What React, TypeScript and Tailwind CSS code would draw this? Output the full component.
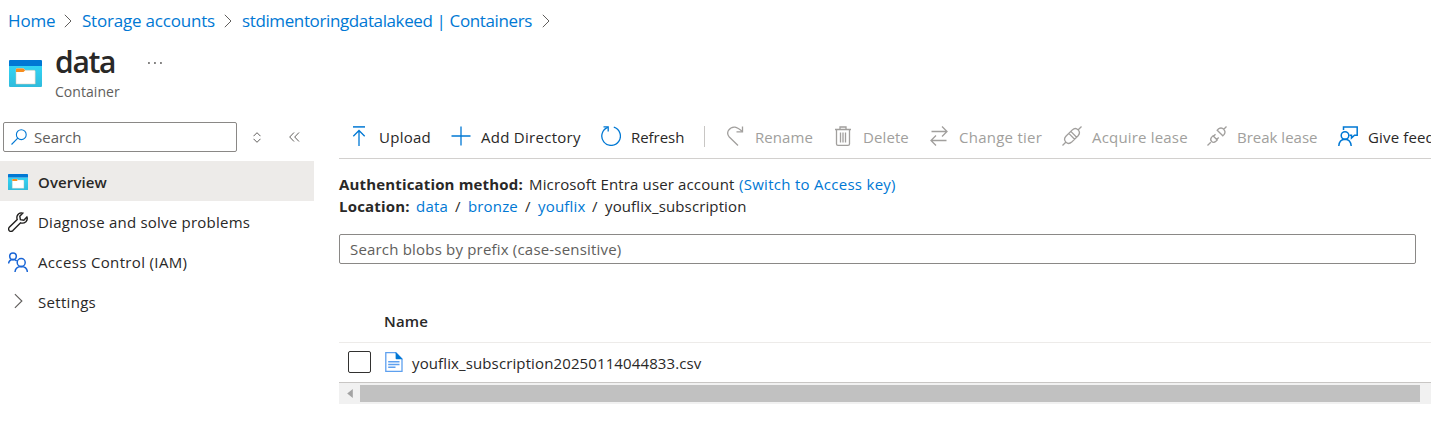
import type { ReactNode } from "react";

function ContainerIcon({ className }: { className: string }) {
  return (
    <svg viewBox="0 0 33 27" preserveAspectRatio="none" className={className}>
      <defs>
        <linearGradient id="panel" x1="0" y1="0" x2="0" y2="1">
          <stop offset="0" stopColor="#32d4f5" />
          <stop offset="1" stopColor="#30bbdc" />
        </linearGradient>
      </defs>
      <path d="M0 6h33v20q0 1-1 1H1q-1 0-1-1z" fill="url(#panel)" />
      <path d="M1 0h31q1 0 1 1v5H0V1q0-1 1-1z" fill="#0078d4" />
      <path d="M7 24V9.7Q7 8.6 8.100 8.600H14.500L16.500 10.300H25.300Q26.200 10.300 26.200 11.200V24z" fill="#fff" stroke="#d9c7b0" strokeWidth=".5" />
      <path d="M7 12V9.600Q7 8.600 8 8.600H14.300L16.200 10.300L14.500 12z" fill="#f78d1e" />
    </svg>
  );
}

function Stroke({ children, className }: { children: ReactNode; className: string }) {
  return (
    <svg viewBox="0 0 20 20" fill="none" stroke="currentColor" strokeWidth="1.3" className={`size-5 shrink-0 ${className}`}>
      {children}
    </svg>
  );
}

function Chevron({ className }: { className: string }) {
  return (
    <svg viewBox="0 0 8 14" fill="none" stroke="#605e5c" className={className}>
      <path d="M.8.800 7 7 .8 13.200" />
    </svg>
  );
}

const plugHalf = "M6 9.800 10.200 14 8.900 15.300Q6.700 17.300 4.600 15.400Q2.700 13.300 4.700 11.100z";

const tools: { label: string; width: string; text: string; disabled?: boolean; icon: ReactNode }[] = [
  { label: "Upload", width: "w-[102px]", text: "tracking-[0.27px]", icon: <><path d="M4 .900H16" strokeWidth="1.5" /><path d="M10 20V4.500M4.300 10.200 10 4.500l5.700 5.700" /></> },
  { label: "Add Directory", width: "w-[150px]", text: "tracking-[0.28px]", icon: <path d="M10 .500v19M.5 10h19" /> },
  { label: "Refresh", width: "w-[103px]", text: "tracking-[-0.05px]", icon: <><path d="M6.800 1.400A9.300 9.300 0 1 0 12.800 1.200" /><path d="M2.500 .900H7.200V5.600" /></> },
];

const disabledTools: typeof tools = [
  { label: "Rename", width: "w-[108px]", text: "tracking-[0.08px]", disabled: true, icon: <><path d="M13 19.500 4.300 11Q1.500 8 3.500 4.300Q6 .600 10 1.100Q13 1.600 17.300 5.400" /><path d="M17.500 .500V5.800H11.500" /></> },
  { label: "Delete", width: "w-[96px]", text: "tracking-[0.1px]", disabled: true, icon: <path d="M2 3.500H18M7 3.500V1H13V3.500M3.500 3.500V18Q3.500 19.300 5 19.300H15Q16.500 19.300 16.500 18V3.500M7.500 6.500V16.500M10 6.500V16.500M12.500 6.500V16.500" /> },
  { label: "Change tier", width: "w-[133px]", text: "tracking-[0.25px]", disabled: true, icon: <path d="M2.500 5.500H18M13 .500l5 5-5 5M17.500 14.500H2M7 9.500l-5 5 5 5" /> },
  { label: "Acquire lease", width: "w-[145px]", text: "tracking-[0.18px]", disabled: true, icon: <path d="M.5 19.500 4 16M16 4 19.500.500M3.900 10.300 10.300 3.900Q13.400 1.200 16.100 3.900T16.100 9.700L9.700 16.100Q6.600 18.800 3.900 16.100T3.900 10.300M6.800 7.400 12.600 13.200M8.800 5.400 14.600 11.200" /> },
  { label: "Break lease", width: "w-[131px]", text: "tracking-[0px]", disabled: true, icon: <path d={`M.5 19.500 3.800 16.200M16.800 3.200 19.500.500${plugHalf}M6.500 10.300 8.500 8.300M9.700 13.500 11.700 11.500M10.200 4.200 15.800 9.800 17.200 8.400Q19 5.800 16.800 3.400T11.600 2.800z`} /> },
];

function Tool({ label, width, text, disabled, icon }: (typeof tools)[number]) {
  return (
    <button className={`flex h-full shrink-0 items-center gap-[10px] ${width}`}>
      <Stroke className={disabled ? "text-[#a19f9d]" : "text-[#0078d4]"}>{icon}</Stroke>
      <span className={`mt-[2px] whitespace-nowrap ${text} ${disabled ? "text-[#a19f9d]" : ""}`}>{label}</span>
    </button>
  );
}

export default function App() {
  return (
    <div className="flex h-[430px] w-[1431px] flex-col overflow-hidden bg-white font-['Open_Sans',sans-serif] text-[15px] leading-[22px] text-[#292827]">
      <nav className="flex h-[42px] shrink-0 items-center pl-2 text-[17px] text-[#0078d4]">
        <a className="w-[56px] tracking-[-0.15px]">Home</a>
        <Chevron className="h-3.5 w-2" />
        <a className="ml-[10px] w-[142px] whitespace-nowrap tracking-[-0.2px]">Storage accounts</a>
        <Chevron className="h-3.5 w-2" />
        <a className="ml-[10px] w-[300px] whitespace-nowrap tracking-[-0.38px]">stdimentoringdatalakeed | Containers</a>
        <Chevron className="h-3.5 w-2" />
      </nav>

      <header className="flex h-[80px] shrink-0 pl-[9px]">
        <ContainerIcon className="mt-[18px] h-[27px] w-[33px]" />
        <div className="ml-[13px] w-[93px]">
          <h1 className="h-10 text-[30px] leading-10 font-semibold tracking-[-1.3px]">data</h1>
          <p className="h-5 text-[14px] leading-5 text-[#605e5c] tracking-[0.05px]">Container</p>
        </div>
        <svg viewBox="0 0 14 2" className="mt-[20px] h-0.5 w-3.5" fill="#323130">
          <path d="M.2.300h1.500v1.500H.2zM6.200.300h1.500v1.500H6.200zM12.200.300h1.500v1.500h-1.500z" />
        </svg>
      </header>

      <div className="flex min-h-0 flex-1">
        <aside className="w-[314px] shrink-0">
          <div className="flex h-[39px] items-start pl-[3px]">
            <div className="flex h-[30px] w-[234px] items-center rounded-[2px] border border-[#8a8886] pl-[7px] text-[#605e5c]">
              <svg viewBox="0 0 16 16" fill="none" stroke="#0078d4" strokeWidth="1.100" className="size-4">
                <circle cx="10.300" cy="5.700" r="4.900" />
                <path d="M6.800 9.200.5 15.500" />
              </svg>
              <span className="ml-[7px]">Search</span>
            </div>
            <svg viewBox="0 0 8 11" fill="none" stroke="#605e5c" className="mt-[10px] ml-[16px] h-[11px] w-2">
              <path d="M.5 4.200 4 .700l3.500 3.500M.5 6.800 4 10.300l3.500-3.500" />
            </svg>
            <svg viewBox="0 0 11 10" fill="none" stroke="#605e5c" className="mt-[10px] ml-[28px] h-[10px] w-[11px]">
              <path d="M5 .500.700 5 5 9.500M10 .500 5.700 5 10 9.500" />
            </svg>
          </div>
          <ul>
            <li className="flex h-10 items-center bg-[#edebe9] pl-2 font-semibold">
              <span className="flex w-[30px] pt-[2px]"><ContainerIcon className="h-4 w-5" /></span>
              <span className="mt-px tracking-[0.12px]">Overview</span>
            </li>
            <li className="flex h-10 items-center pl-2">
              <span className="flex w-[30px] pt-[2px]">
                <Stroke className="text-[#201f1e]">
                  <path d="M14.800 1.100Q10.700.100 9.100 4Q8.600 6 9.200 7.500L1.300 15.200Q-.2 17.300 1.300 18.700Q3 20.200 4.900 18.600L12.600 10.800Q15.600 11.700 17.900 9.700Q20 7.500 18.900 4.900L15.800 8.200 12.400 7.600 11.800 4.300z" strokeWidth="1.400" />
                </Stroke>
              </span>
              <span className="mt-px tracking-[0.23px]">Diagnose and solve problems</span>
            </li>
            <li className="flex h-10 items-center pl-2">
              <span className="flex w-[30px] pt-[2px]">
                <Stroke className="text-[#1a66d6]">
                  <circle cx="5" cy="4.200" r="3.300" strokeWidth="1.500" />
                  <circle cx="13.200" cy="10.500" r="4" strokeWidth="1.500" />
                  <path d="M.6 11.500Q1 7.800 5 7.500Q7.500 7.600 8.700 9M7 20Q7.400 14.700 13.200 14.500Q19 14.700 19.400 20" strokeWidth="1.500" />
                </Stroke>
              </span>
              <span className="mt-px tracking-[0.35px]">Access Control (IAM)</span>
            </li>
            <li className="flex h-10 items-center pl-2">
              <span className="flex w-[30px] pl-[6px]"><Chevron className="h-4 w-[9px]" /></span>
              <span className="mt-px tracking-[0.3px]">Settings</span>
            </li>
          </ul>
        </aside>

        <main className="ml-[25px] flex w-[1092px] shrink-0 flex-col">
          <div className="flex h-[37px] shrink-0 items-start border-b border-[#d2d0ce] pl-[10px]">
            <div className="flex h-7 items-center">
              {tools.map((t) => <Tool key={t.label} {...t} />)}
              <span className="mr-[20px] h-[21px] w-px shrink-0 bg-[#c8c6c4]" />
              {disabledTools.map((t) => <Tool key={t.label} {...t} />)}
              <Tool
                label="Give feedback"
                width="w-[140px]"
                text="tracking-[0.15px]"
                icon={<><circle cx="7" cy="9.500" r="3.800" strokeWidth="1.500" /><path d="M.8 20Q1.200 13.500 7 13.300Q12.700 13.500 13.200 20M5.500 4V.900H19.200V9.200H16.500L13.500 12V9.200H11.500" strokeWidth="1.500" /></>}
              />
            </div>
          </div>

          <div className="mt-[14px] h-[61px] shrink-0">
            <div className="flex h-[22px] whitespace-nowrap">
              <b className="w-[190px] tracking-[0.16px]">Authentication method:</b>
              <span className="w-[210px] tracking-[0.14px]">Microsoft Entra user account</span>
              <a className="tracking-[0.28px] text-[#0078d4]">(Switch to Access key)</a>
            </div>
            <div className="flex h-[22px] whitespace-nowrap">
              <b className="w-[77px] tracking-[0.2px]">Location:</b>
              <a className="w-[39px] tracking-[0.2px] text-[#0078d4]">data</a>
              <span className="w-[13px]">/</span>
              <a className="w-[57px] tracking-[0.15px] text-[#0078d4]">bronze</a>
              <span className="w-[13px]">/</span>
              <a className="w-[54px] tracking-[0.2px] text-[#0078d4]">youflix</a>
              <span className="w-[13px]">/</span>
              <span className="tracking-[0.12px]">youflix_subscription</span>
            </div>
          </div>

          <div className="flex h-[30px] w-[1077px] shrink-0 items-center rounded-[2px] border border-[#8a8886] pl-[10px] text-[#605e5c]">
            <span className="-mt-px tracking-[0.19px]">Search blobs by prefix (case-sensitive)</span>
          </div>

          <div className="mt-[36px] flex h-[43px] shrink-0 items-center border-b border-[#edebe9] pl-[45px] font-semibold">
            <span className="tracking-[0.15px]">Name</span>
          </div>
          <div className="flex h-[40px] shrink-0 items-center border-b border-[#c8c6c4] pl-[9px]">
            <span className="-mt-px h-[22px] w-[23px] rounded-[2px] border border-[#323130]" />
            <svg viewBox="0 0 18 20" className="-mt-px ml-[14px] h-5 w-[18px]" fill="none">
              <path d="M.8.700H10.800L17 7V19.300H.8z" fill="#fff" stroke="#5ea0ef" strokeWidth="1.300" />
              <path d="M10.600 0V6.300Q10.600 7.200 11.500 7.200H17.700z" fill="#0078d4" />
              <path d="M3.200 9.700H14.500M3.200 12.500H14.500M3.200 15.300H10.500" stroke="#5ea0ef" strokeWidth="1.500" />
            </svg>
            <span className="mt-px ml-[9px] tracking-[0.12px]">youflix_subscription20250114044833.csv</span>
          </div>
          <div className="flex h-[21px] shrink-0 items-center bg-[#f1f1f1] pl-[8px]">
            <svg viewBox="0 0 5 8" className="h-[9px] w-[6px]" fill="#a3a3a3"><path d="M5 0v8L0 4z" /></svg>
            <span className="ml-[7px] h-[17px] w-[1060px] bg-[#c1c1c1]" />
          </div>
        </main>
      </div>
    </div>
  );
}
